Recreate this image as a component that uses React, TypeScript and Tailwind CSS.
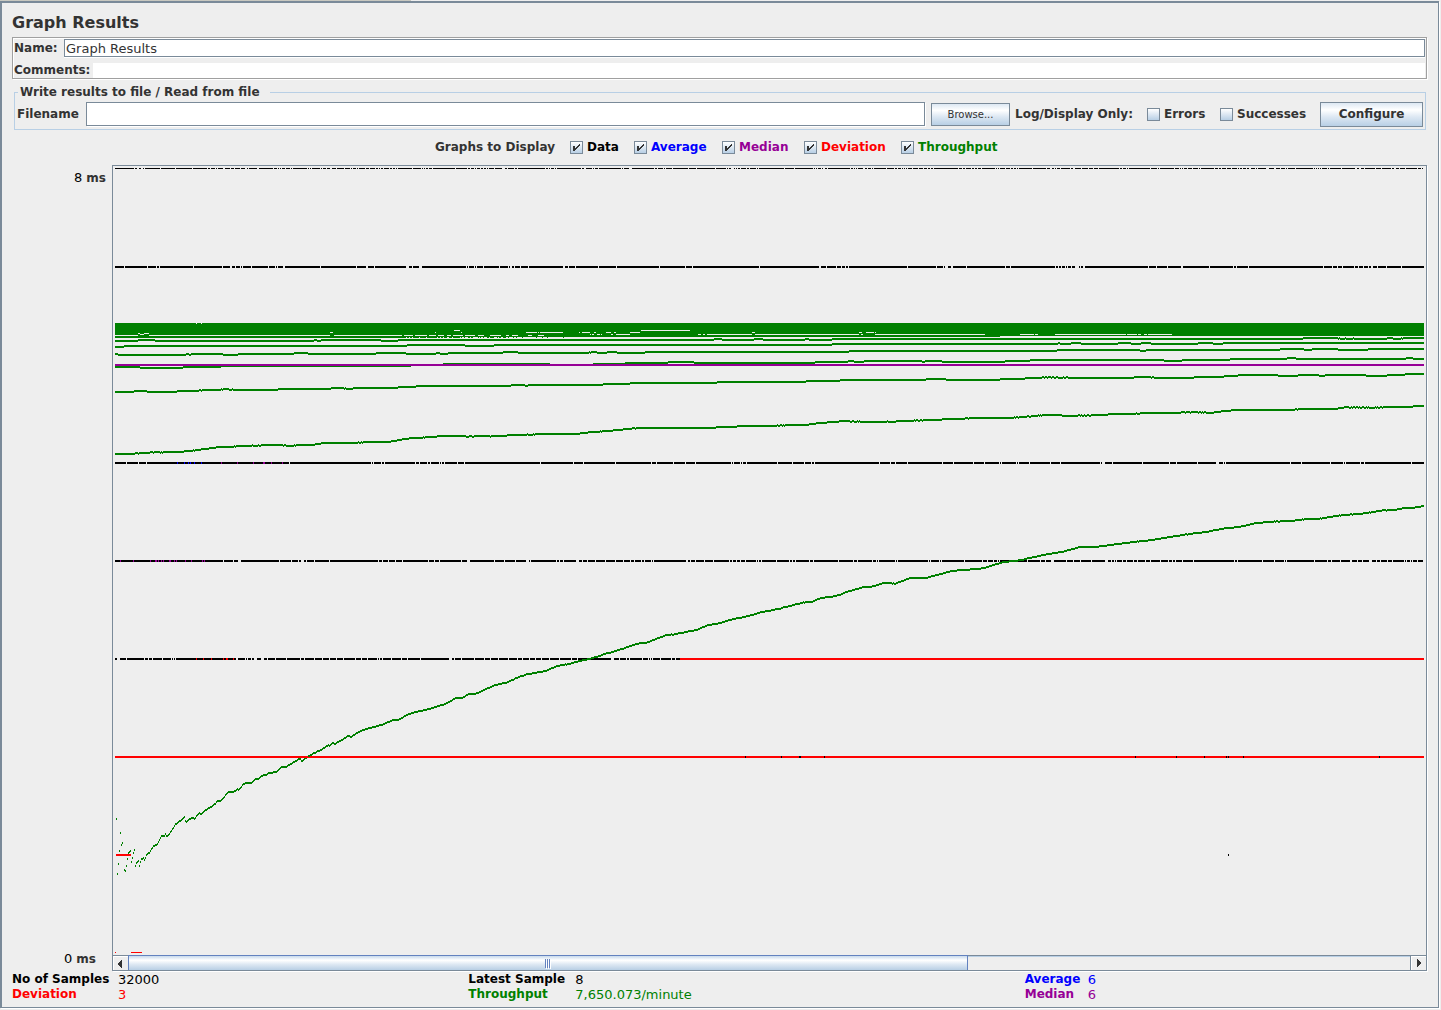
import React, { useState } from "react";

/* ------------------------------------------------------------------ */
/* Plot data                                                           */
/* ------------------------------------------------------------------ */

const LEFT = 115;
const RIGHT = 1424;

type Tile = { x: number; y: number; sx: number; pts: number[] };

function prng(seed: number) {
  let s = seed;
  return () => {
    s = (s * 1103515245 + 12345) % 2147483648;
    return s / 2147483648;
  };
}

/* Turns tiles of (u, v) samples into one flat list of plot points. */
function flatten(tiles: Tile[]) {
  const out: [number, number][] = [];
  for (const t of tiles) {
    for (let i = 0; i < t.pts.length; i += 2) {
      out.push([t.x + t.pts[i] / t.sx, t.y + t.pts[i + 1] / 3 - 1]);
    }
  }
  return out;
}

/* Draws one two-pixel-high dot for each column along a polyline. */
function trace(tiles: Tile[], jitter: number, seed: number, from = LEFT, to = RIGHT) {
  const pts = flatten(tiles);
  const rnd = prng(seed);
  let d = "";
  let k = 0;
  for (let x = from; x < to; x++) {
    while (k < pts.length - 2 && pts[k + 1][0] <= x) k++;
    const [xa, ya] = pts[k];
    const [xb, yb] = pts[k + 1];
    const f = xb === xa ? 0 : Math.min(1, Math.max(0, (x - xa) / (xb - xa)));
    const raw = ya + (yb - ya) * f;
    const y = Math.round(raw + (rnd() - 0.5) * jitter);
    d += `M${x} ${y}h1v2h-1z`;
  }
  return d;
}

/* A row of samples, solid except at the listed [start, length] gaps. */
function row(y: number, h: number, from: number, to: number, gaps: [number, number][]) {
  let d = "";
  let x = from;
  for (const [g, n] of gaps) {
    if (g < x) continue;
    if (g > x) d += `M${x} ${y}h${g - x}v${h}h${x - g}z`;
    x = g + n;
  }
  if (x < to) d += `M${x} ${y}h${to - x}v${h}h${x - to}z`;
  return d;
}

function gapsAt(origin: number, sx: number, us: number[]): [number, number][] {
  return us.map((u) => {
    const wide = u < 0;
    return [Math.round(origin + Math.abs(u) / sx - 0.5), wide ? 3 : 1];
  });
}

function scatterGaps(p: number, seed: number): [number, number][] {
  const rnd = prng(seed);
  const out: [number, number][] = [];
  let burst = 0;
  for (let x = LEFT + 2; x < RIGHT; x++) {
    if (burst > 0) burst--;
    if (rnd() < (burst > 0 ? 0.3 : p)) {
      out.push([x, rnd() < 0.12 ? 2 : 1]);
      if (rnd() < 0.35) burst = 8;
      x++;
    }
  }
  return out;
}

const a = (pts: number[]): Tile => ({ x: 100, y: 310, sx: 3, pts });
const b = (pts: number[]): Tile => ({ x: 550, y: 310, sx: 3, pts });
const c = (pts: number[]): Tile => ({ x: 1000, y: 310, sx: 3, pts });

const lineMain = trace(
  [
    {
      x: 100, y: 730, sx: 3,
      pts: [139, 375, 142, 369, 148, 367, 160, 346, 163, 351, 166, 343, 169, 345, 175, 333, 184, 318, 193, 316,
        196, 309, 199, 324, 202, 318, 215, 300, 225, 284, 235, 273, 243, 270, 252, 262, 256, 276, 259, 278,
        265, 268, 275, 264, 283, 267, 295, 249, 303, 252, 315, 240, 325, 235, 340, 226, 352, 213, 358, 215,
        370, 203, 383, 186, 400, 186, 410, 178, 414, 180, 430, 161, 455, 158, 465, 147, 475, 146, 490, 134,
        495, 136, 503, 129, 515, 129, 523, 125, 530, 124, 545, 111, 555, 112, 575, 99, 585, 94, 597, 86,
        605, 93, 615, 85, 630, 75, 655, 63, 660, 61, 680, 47, 688, 47, 698, 39, 705, 41, 718, 33],
    },
    {
      x: 100, y: 540, sx: 2.24,
      pts: [538, 602, 555, 588, 562, 590, 580, 575, 600, 565, 630, 555, 655, 540, 665, 540, 690, 523, 715, 513,
        740, 506, 775, 490, 795, 475, 810, 474, 825, 462, 840, 462, 870, 443, 890, 433, 910, 428, 935, 412,
        958, 402, 998, 393, 1020, 380, 1045, 373, 1070, 364, 1100, 355, 1135, 340, 1165, 328, 1210, 309,
        1225, 308, 1265, 286, 1285, 283, 1335, 270, 1360, 256, 1385, 250, 1415, 238, 1450, 229, 1480, 217,
        1515, 208, 1567, 190],
    },
    {
      x: 800, y: 490, sx: 2.442,
      pts: [0, 339, 30, 335, 45, 326, 90, 317, 110, 307, 150, 292, 180, 289, 205, 279, 232, 281, 265, 265,
        305, 264, 335, 254, 370, 243, 410, 239, 445, 235, 495, 216, 530, 212, 560, 204, 600, 193, 645, 184,
        680, 172, 725, 170, 780, 161, 820, 155, 840, 153, 900, 142, 950, 132, 1000, 124, 1030, 116, 1070, 111,
        1110, 100, 1150, 95, 1190, 94, 1235, 87, 1270, 86, 1300, 79, 1330, 75, 1380, 70, 1415, 62, 1450, 60,
        1480, 54, 1500, 53, 1524, 47],
    },
  ],
  0.4, 7, 146,
);

const earlyDots = [
  49, 267, 52, 432, 55, 402, 58, 363, 61, 309, 64, 345, 67, 339, 70, 375, 73, 420, 76, 423, 79, 408, 82, 387,
  85, 369, 88, 366, 91, 363, 94, 396, 97, 384, 100, 369, 103, 360, 106, 408, 109, 399, 112, 396, 115, 393,
  118, 408, 121, 396, 124, 387, 127, 387, 130, 384, 133, 390, 136, 384,
];
let early = "";
for (let i = 0; i < earlyDots.length; i += 2) {
  early += `M${Math.floor(100 + earlyDots[i] / 3)} ${Math.round(730 + earlyDots[i + 1] / 3 - 1)}h1v2h-1z`;
}

const lineB = trace(
  [
    a([45, 433, 115, 430, 160, 427, 220, 427, 250, 424, 290, 421, 330, 414, 365, 411, 430, 408, 480, 406, 525, 404,
      560, 407, 630, 405, 670, 400, 720, 400, 800, 397, 865, 396, 910, 388, 940, 384, 1000, 381, 1030, 378,
      1090, 379, 1180, 379, 1230, 376, 1280, 374, 1349, 372]),
    b([0, 372, 80, 371, 100, 369, 120, 367, 155, 364, 190, 361, 225, 357, 285, 354, 490, 354, 500, 352, 565, 349,
      665, 347, 760, 345, 800, 340, 840, 337, 880, 333, 915, 335, 1025, 335, 1060, 333, 1120, 331, 1190, 328,
      1260, 325, 1349, 324]),
    c([0, 324, 60, 322, 90, 319, 125, 316, 175, 314, 190, 318, 275, 316, 330, 313, 400, 311, 440, 309, 480, 310,
      570, 307, 635, 308, 665, 304, 710, 300, 790, 300, 850, 301, 905, 297, 1010, 296, 1030, 292, 1110, 293,
      1200, 291, 1230, 290, 1270, 288]),
  ],
  0.4, 21,
);

const lineC = trace(
  [
    a([45, 247, 90, 245, 120, 243, 150, 246, 220, 246, 235, 243, 310, 241, 380, 238, 400, 239, 500, 239, 530, 239,
      540, 237, 630, 236, 685, 236, 700, 234, 750, 236, 765, 234, 893, 234, 895, 231, 945, 231, 948, 228,
      1220, 228, 1240, 225, 1280, 227, 1290, 225, 1349, 224]),
    b([0, 225, 155, 225, 160, 222, 238, 222, 240, 219, 500, 219, 502, 216, 765, 216, 768, 213, 868, 213, 870, 210,
      970, 210, 975, 211, 1020, 210, 1120, 210, 1130, 208, 1185, 208, 1190, 210, 1220, 210, 1225, 211, 1270, 211,
      1349, 210]),
    c([0, 207, 73, 207, 75, 204, 120, 204, 125, 202, 220, 203, 400, 203, 402, 201, 450, 202, 480, 204, 575, 204,
      590, 201, 668, 201, 670, 198, 712, 198, 715, 195, 830, 195, 835, 198, 890, 198, 892, 195, 954, 195,
      956, 198, 972, 198, 975, 195, 1095, 195, 1100, 198, 1158, 198, 1160, 195, 1213, 195, 1215, 192, 1270, 192]),
  ],
  0.3, 33,
);

const lineD = trace(
  [
    a([45, 171, 118, 171, 120, 174, 243, 174, 250, 171, 312, 172, 362, 171, 364, 168, 930, 168, 935, 165, 1028, 165,
      1030, 162, 1349, 162]),
    b([0, 165, 128, 165, 130, 162, 224, 162, 225, 159, 352, 159, 354, 156, 430, 156, 432, 159, 793, 159, 795, 156,
      890, 156, 895, 153, 910, 153, 912, 156, 938, 156, 940, 153, 1100, 153, 1120, 155, 1130, 153, 1172, 153,
      1175, 156, 1349, 156]),
    c([0, 156, 12, 156, 13, 153, 88, 153, 90, 150, 485, 150, 490, 152, 545, 152, 547, 150, 688, 150, 690, 147,
      857, 147, 859, 144, 884, 144, 886, 147, 1217, 147, 1219, 144, 1238, 144, 1240, 147, 1270, 147]),
  ],
  0.15, 41,
);

const lineE = trace(
  [
    a([45, 132, 53, 132, 55, 135, 255, 135, 258, 132, 270, 135, 272, 132, 368, 132, 370, 135, 410, 135, 413, 132,
      578, 132, 580, 129, 623, 129, 625, 132, 826, 132, 828, 129, 914, 129, 916, 132, 1005, 132, 1007, 129,
      1017, 129, 1019, 132, 1040, 132, 1042, 129, 1200, 129, 1215, 126, 1253, 126, 1255, 129, 1349, 129]),
    b([0, 129, 85, 129, 90, 128, 140, 127, 145, 129, 170, 129, 172, 126, 197, 126, 199, 129, 284, 129, 286, 126,
      896, 126, 898, 123, 1349, 123]),
    c([0, 123, 170, 123, 172, 120, 416, 120, 418, 123, 437, 123, 439, 120, 838, 120, 840, 117, 908, 117, 910, 120,
      933, 120, 935, 117, 990, 117, 1000, 118, 1035, 119, 1040, 120, 1100, 119, 1108, 117, 1270, 117]),
  ],
  0.15, 55,
);

const lineF = trace(
  [
    a([45, 111, 70, 111, 72, 108, 920, 108, 922, 105, 1093, 105, 1095, 108, 1181, 108, 1183, 105, 1349, 105]),
    b([0, 105, 842, 105, 844, 102, 1349, 102]),
    c([0, 102, 170, 102, 172, 99, 180, 101, 210, 101, 214, 99, 240, 99, 242, 102, 353, 102, 355, 99, 390, 99,
      392, 102, 430, 100, 470, 101, 475, 102, 592, 102, 594, 99, 638, 99, 640, 102, 665, 102, 667, 99, 1270, 99]),
  ],
  0.15, 60,
);

const lineG = trace(
  [
    a([45, 93, 110, 93, 112, 90, 161, 90, 163, 93, 638, 93, 642, 90, 660, 93, 662, 90, 835, 90, 850, 93, 893, 93,
      895, 90, 1349, 90]),
    b([0, 90, 488, 90, 490, 87, 513, 87, 515, 90, 611, 90, 613, 87, 637, 87, 640, 90, 762, 90, 764, 87, 775, 87,
      777, 90, 797, 90, 799, 90, 842, 90, 844, 87, 1349, 87]),
    c([0, 87, 905, 87, 907, 85, 960, 85, 1100, 86, 1160, 86, 1162, 84, 1180, 86, 1270, 84]),
  ],
  0.2, 77,
);

const lineH = trace([a([45, 81, 905, 81, 907, 80, 1349, 79]), b([0, 78, 50, 79, 75, 78, 1349, 78])], 0.6, 81, 115, 1000);

/* Gaps between the topmost throughput traces, as [x, y, width]. */
const slits: [number, number, number][] = [
  [196, 323, 1], [201, 323, 1], [115, 335, 23], [138, 333, 2], [140, 334, 4], [144, 333, 5], [149, 335, 181],
  [330, 332, 3], [334, 335, 68], [404, 335, 9], [415, 335, 12], [429, 335, 7], [438, 335, 6], [435, 332, 1],
  [447, 335, 4], [454, 330, 6], [461, 332, 1], [453, 335, 10], [465, 335, 10], [478, 335, 6], [490, 335, 11],
  [506, 335, 3], [512, 335, 6], [526, 332, 11], [538, 332, 1], [540, 332, 23], [528, 335, 4], [538, 335, 6],
  [579, 332, 1], [582, 332, 8], [590, 334, 1], [592, 334, 2], [594, 332, 2], [597, 334, 3], [601, 334, 1],
  [606, 332, 5], [611, 334, 2], [614, 332, 2], [616, 334, 14], [630, 332, 10], [641, 330, 49],
  [698, 334, 3], [703, 334, 2], [707, 334, 45], [752, 332, 3], [755, 334, 104], [859, 332, 3], [861, 334, 2],
  [866, 332, 8], [875, 332, 1], [875, 334, 110], [1020, 334, 14], [1035, 334, 3], [1055, 334, 71],
  [1127, 334, 10], [1138, 334, 3], [1144, 334, 3], [1148, 334, 24],
];

const row8 = row(168, 1, LEFT, RIGHT - 1, scatterGaps(0.11, 5));
const row7 = row(266, 2, LEFT, RIGHT, scatterGaps(0.045, 12));
const row5 = row(462, 2, LEFT, RIGHT, [
  ...gapsAt(100, 3, [79, 115, 140, 568, 814, 820, 844, 853, 947, 958, 982, 992, 1018, 1025, 1034, 1072, 1093, 1321]),
  ...gapsAt(550, 3, [70, 100, 196, 304, 320, 370, 406, 436, 544, 550, 572, 577, 590, 682, 728, 763, 784, 793, 988,
    1021, 1036, 1072, 1177, 1210, 1270, 1303, 1348]),
  ...gapsAt(1000, 3, [4, 49, 55, 88, 151, 181, 301, -307, 337, 427, 508, 529, 592, -649, 670, 676, 871, 904, 991,
    1030, 1036, 1081, 1093, 1234]),
]);
const row4 = row(560, 2, LEFT, RIGHT, [
  ...gapsAt(100, 2.24, [277, 298, -311, 401, 428, 444, -452, 462, 480, 513, 623, 632, 647, 661, 677, 735, 750, 760,
    809, -824, 883, 906, 930, -955, 965, 1022, 1030, 1039, -1067, 1080, 1093, 1111, 1132, 1154, 1173, 1188, 1197,
    1213, 1220, 1235, 1240, 1313, 1317, 1322, 1335, 1354, 1375, 1411, 1417, 1425, 1435, 1447, 1470, 1475, 1481,
    1516, 1544, 1552, 1558]),
  ...gapsAt(800, 2.442, [22, 33, 94, 131, 140, 178, 187, 191, 232, 238, 313, 318, 340, 345, 402, 445, 458, 472, 483,
    487, 514, 555, 587, 600, -614, 652, 668, 685, 712, -746, 761, 768, 774, 788, 797, 815, 823, 843, 856, 880, 900,
    910, 918, 933, 960, 1060, 1068, 1130, 1158, 1183, 1187, 1257, 1288, 1298, 1320, 1344, 1347, 1362, 1374, -1390,
    1407, 1418, 1434, 1446, 1475, 1481, 1490, 1495, 1508, 1522]),
]);
const row3 = row(658, 2, LEFT, 680, gapsAt(100, 2.24, [-40, 60, 100, 108, 118, 140, 160, 164, 170, 305, 308, 325,
  330, 340, -347, -361, 376, 393, 418, 448, 457, 480, 498, 515, 530, 545, 573, 586, 600, 621, 625, 633, 652, 676,
  688, 718, -784, 795, 810, 838, 862, 874, 893, 915, 935, 947, 961, 976, 990, 1006, 1030, 1056, 1070, -1145, 1163,
  1180, 1185, 1215, 1229, 1233, 1238, 1256, 1280, 1290]));

const ticks: [number, number, string][] = [
  [177, 462, "#0000ff"], [184, 462, "#0000ff"], [188, 462, "#0000ff"], [190, 462, "#0000ff"], [194, 462, "#0000ff"],
  [201, 462, "#0000ff"], [221, 462, "#960096"], [237, 462, "#960096"], [253, 462, "#960096"], [263, 462, "#960096"],
  [264, 462, "#960096"], [271, 462, "#960096"], [282, 462, "#960096"],
  [120, 560, "#960096"], [133, 560, "#960096"], [150, 560, "#960096"], [155, 560, "#960096"], [156, 560, "#960096"],
  [158, 560, "#960096"], [161, 560, "#960096"], [163, 560, "#960096"], [169, 560, "#960096"], [170, 560, "#960096"],
  [174, 560, "#960096"], [176, 560, "#960096"], [185, 560, "#960096"], [191, 560, "#960096"], [202, 560, "#960096"],
  [204, 560, "#960096"],
  [196, 658, "#ff0000"], [203, 658, "#ff0000"], [211, 658, "#ff0000"], [223, 658, "#ff0000"], [226, 658, "#ff0000"],
  [227, 658, "#ff0000"], [233, 658, "#ff0000"],
  [745, 756, "#000000"], [781, 756, "#000000"], [799, 756, "#000000"], [800, 756, "#000000"], [824, 756, "#000000"],
  [1135, 756, "#000000"], [1176, 756, "#000000"], [1204, 756, "#000000"], [1226, 756, "#000000"],
  [1228, 756, "#000000"], [1243, 756, "#000000"], [1379, 756, "#000000"], [1228, 854, "#000000"],
];

function Plot() {
  return (
    <svg
      id="plot"
      role="img"
      aria-label="Response times in milliseconds and throughput"
      viewBox="113 166 1313 789"
      preserveAspectRatio="none"
      shapeRendering="crispEdges"
      className="block min-h-0 w-full flex-1"
    >
      <path d={row8 + row7 + row5 + row4 + row3} fill="#000" />
      <rect x={LEFT} y={756} width={RIGHT - LEFT} height={2} fill="#f00" />
      <rect x={680} y={658} width={RIGHT - 680} height={2} fill="#f00" />
      <path d={early} fill="#008000" />
      <rect x={116} y={854} width={15} height={2} fill="#f00" />
      <rect x={115} y={952} width={1} height={1} fill="#f00" />
      <rect x={131} y={952} width={11} height={1} fill="#f00" />
      <path d={`M${LEFT} 323h${RIGHT - LEFT}v13H${LEFT}z`} fill="#008000" />
      <path d={lineMain + lineB + lineC + lineD + lineE + lineF + lineG + lineH} fill="#008000" />
      <rect x={300} y={756} width={8} height={2} fill="#f00" />
      {slits.map(([x, y, w], i) => (
        <rect key={i} x={x} y={y} width={w} height={1} fill="#eee" />
      ))}
      <rect x={LEFT} y={364} width={RIGHT - LEFT} height={2} fill="#960096" />
      {ticks.map(([x, y, f], i) => (
        <rect key={i} x={x} y={y} width={1} height={2} fill={f} />
      ))}
    </svg>
  );
}

/* ------------------------------------------------------------------ */
/* Controls                                                            */
/* ------------------------------------------------------------------ */

function Check({ label, initial, className }: { label: string; initial: boolean; className: string }) {
  const [on, setOn] = useState(initial);
  return (
    <label className={`flex items-center gap-1 whitespace-nowrap ${className}`}>
      <span className="relative block size-[13px]">
        <input
          type="checkbox"
          checked={on}
          onChange={(e) => setOn(e.target.checked)}
          className="block size-[13px] appearance-none border border-[#7a8a99] bg-linear-to-b from-white to-[#b8cfe5]"
        />
        {on && (
          <svg
            viewBox="0 0 13 13"
            shapeRendering="crispEdges"
            className="pointer-events-none absolute inset-0 size-[13px]"
          >
            <path
              fill="#333"
              d="M3 5h2v5h-2zM5 7h1v2h-1zM6 6h1v2h-1zM7 5h1v2h-1zM8 4h1v2h-1zM9 3h1v2h-1z"
            />
          </svg>
        )}
      </span>
      {label}
    </label>
  );
}

function Stat({ label, value, color }: { label: string; value: string; color: string }) {
  return (
    <>
      <dt className={`text-[12px] leading-[15px] font-bold ${color}`}>{label}</dt>
      <dd className={color}>{value}</dd>
    </>
  );
}

const bold = "text-[12px] leading-[15px] font-bold";
const metal =
  "border border-[#7a8a99] bg-[linear-gradient(to_bottom,#dde8f3_0%,#ffffff_30%,#dde8f3_60%,#b8cfe5_100%)]";

export default function App() {
  const [name, setName] = useState("Graph Results");
  const [comments, setComments] = useState("");
  const [file, setFile] = useState("");

  return (
    <div className="flex min-h-screen flex-col bg-[#eeeeee] pr-0.5 pb-0.5 font-['DejaVu_Sans',sans-serif] text-[13px] leading-[15px] text-[#333333]">
      <div className="h-px w-[411px] bg-[#c8c8c0]" />
      <main className="flex flex-1 flex-col border-t-2 border-r border-b border-l-2 border-[#7a8a99] pr-[11px] pb-[5px] pl-2.5 shadow-[1px_1px_0_#ffffff]">
        <h1 className="pt-2.5 pb-1 text-base leading-5 font-bold">Graph Results</h1>

        <section className="flex flex-col gap-1.5 border border-[#a0a0a0] pt-px pr-px pl-px shadow-[1px_1px_0_#ffffff,inset_1px_1px_0_#ffffff]">
          <div className="flex h-[18px] items-center">
            <label htmlFor="name" className={`w-[50px] ${bold}`}>Name:</label>
            <input
              id="name"
              value={name}
              onChange={(e) => setName(e.target.value)}
              className="h-[18px] min-w-0 flex-1 border border-[#7a8a99] bg-white px-px shadow-[0_1px_0_#ffffff] outline-none"
            />
          </div>
          <div className="flex h-[15px] items-center">
            <label htmlFor="comments" className={`w-[79px] ${bold}`}>Comments:</label>
            <input
              id="comments"
              value={comments}
              onChange={(e) => setComments(e.target.value)}
              className="h-[15px] min-w-0 flex-1 bg-white outline-none"
            />
          </div>
        </section>

        <fieldset className={`mt-1.5 mr-px ml-0.5 min-w-0 border border-[#b8cfe5] px-0.5 pt-0.5 pb-0.5 ${bold}`}>
          <legend className="ml-px w-[252px] px-0.5">Write results to file / Read from file</legend>
          <div className="flex h-[25px] items-center">
            <label htmlFor="filename" className="w-[69px]">Filename</label>
            <input
              id="filename"
              value={file}
              onChange={(e) => setFile(e.target.value)}
              className="mr-1.5 h-6 min-w-0 flex-1 self-start border border-[#7a8a99] bg-white px-px text-[13px] font-normal shadow-[1px_1px_0_#ffffff] outline-none"
            />
            <button type="button" className={`mr-[5px] h-[23px] w-[79px] text-[10px] font-normal ${metal}`}>
              Browse...
            </button>
            <span className="mr-2.5 w-[122px] whitespace-nowrap">Log/Display Only:</span>
            <div className="mr-2.5 flex gap-[13px]">
              <Check label="Errors" initial={false} className="w-[60px]" />
              <Check label="Successes" initial={false} className="w-[90px]" />
            </div>
            <button type="button" className={`h-[25px] w-[103px] font-bold ${metal}`}>
              Configure
            </button>
          </div>
        </fieldset>

        <div className={`flex h-[35px] items-center justify-center gap-[13px] pr-1 ${bold}`}>
          <span className="-mr-[3px] w-[125px]">Graphs to Display</span>
          <Check label="Data" initial className="w-[51px] text-black" />
          <Check label="Average" initial className="w-[75px] text-[#0000ff]" />
          <Check label="Median" initial className="w-[69px] text-[#960096]" />
          <Check label="Deviation" initial className="w-[84px] text-[#ff0000]" />
          <Check label="Throughput" initial className="w-[99px] text-[#008000]" />
        </div>

        <div className="flex flex-1">
          <div className="flex w-[100px] flex-col items-end justify-between pt-[5px] pb-1">
            <span className="pr-1.5">
              <span className="text-black">8</span> <b className={bold}>ms</b>
            </span>
            <span className="pr-4">
              <span className="text-black">0</span> <b className={bold}>ms</b>
            </span>
          </div>
          <div className="flex min-w-0 flex-1 flex-col border border-[#7a8a99] shadow-[1px_1px_0_#ffffff]">
            <Plot />
            <div className="flex h-[15px] border-t border-[#7a8a99]">
              <button
                type="button"
                aria-label="Scroll left"
                className="flex w-[15px] items-center border-t border-l border-white pl-1"
              >
                <svg viewBox="0 0 4 8" className="h-2 w-1" shapeRendering="crispEdges">
                  <path fill="#333" d="M3 0h1v8h-1zM2 1h1v6h-1zM1 2h1v4h-1zM0 3h1v2h-1z" />
                </svg>
              </button>
              <div
                role="scrollbar"
                aria-orientation="horizontal"
                aria-controls="plot"
                aria-valuenow={0}
                className="flex flex-1 shadow-[inset_0_1px_0_#b8cfe5]"
              >
                <div className="-mt-px flex w-[65.5%] items-center justify-center border-t border-r border-l border-[#6382bf] bg-[linear-gradient(to_bottom,#c8daec_0%,#ffffff_30%,#dde8f3_60%,#b8cfe5_100%)]">
                  <div className="flex gap-px">
                    <i className="h-[9px] w-px bg-[#6382bf] shadow-[1px_1px_0_#ffffff]" />
                    <i className="h-[9px] w-px bg-[#6382bf] shadow-[1px_1px_0_#ffffff]" />
                    <i className="h-[9px] w-px bg-[#6382bf] shadow-[1px_1px_0_#ffffff]" />
                  </div>
                </div>
              </div>
              <button
                type="button"
                aria-label="Scroll right"
                className="flex w-4 items-center border-l border-[#7a8a99] pl-1.5 shadow-[inset_1px_1px_0_#ffffff]"
              >
                <svg viewBox="0 0 4 8" className="h-2 w-1" shapeRendering="crispEdges">
                  <path fill="#333" d="M0 0h1v8h-1zM1 1h1v6h-1zM2 2h1v4h-1zM3 3h1v2h-1z" />
                </svg>
              </button>
            </div>
          </div>
        </div>

        <div className="mt-px grid grid-cols-[456fr_556fr_402fr]">
          <dl className="grid grid-cols-[106px_1fr]">
            <Stat label="No of Samples" value="32000" color="text-black" />
            <Stat label="Deviation" value="3" color="text-[#ff0000]" />
          </dl>
          <dl className="grid grid-cols-[107px_1fr]">
            <Stat label="Latest Sample" value="8" color="text-black" />
            <Stat label="Throughput" value="7,650.073/minute" color="text-[#008000]" />
          </dl>
          <dl className="grid grid-cols-[63px_1fr]">
            <Stat label="Average" value="6" color="text-[#0000ff]" />
            <Stat label="Median" value="6" color="text-[#960096]" />
          </dl>
        </div>
      </main>
    </div>
  );
}
